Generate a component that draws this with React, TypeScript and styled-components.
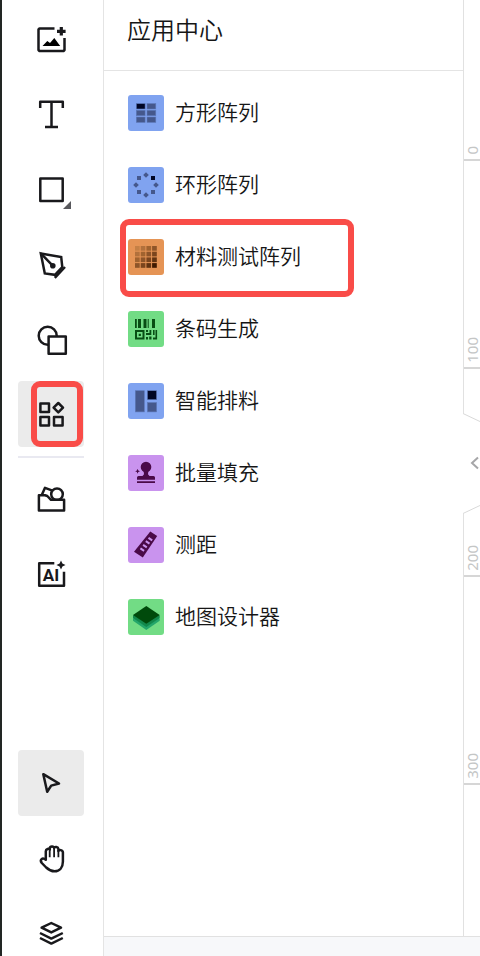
import React from "react";
import styled, { createGlobalStyle } from "styled-components";

const GlobalStyle = createGlobalStyle`
  *, *::before, *::after { box-sizing: border-box; }
  body {
    margin: 0;
    background: #ffffff;
    color: #161616;
    font-family: "Noto Sans CJK SC", "Noto Sans", sans-serif;
  }
  button { font: inherit; color: inherit; }
`;

const Shell = styled.div`
  display: flex;
  height: 100vh;
  overflow: hidden;
  border-left: 2px solid #222624;
`;

const Toolbar = styled.nav`
  flex: none;
  width: 102px;
  padding: 6px 19px 0 16px;
  border-right: 1px solid #e4e4e4;
`;

const ToolGroup = styled.div<{ $bottom?: boolean }>`
  display: flex;
  flex-direction: column;
  gap: 9px;
  margin-top: ${(p) => (p.$bottom ? "143px" : "0")};
`;

const ToolButton = styled.button<{ $active?: boolean }>`
  position: relative;
  display: flex;
  flex: none;
  align-items: center;
  justify-content: center;
  width: 66px;
  height: 66px;
  padding: 0;
  border: 0;
  border-radius: 4px;
  background: ${(p) => (p.$active ? "#ebebeb" : "transparent")};
  cursor: pointer;
`;

const Separator = styled.hr`
  height: 2px;
  margin: 9px 0 8px;
  border: 0;
  background: #e9e9f1;
`;

const ToolSvg = styled.svg`
  display: block;
  width: 36px;
  height: 36px;
  overflow: visible;
  fill: none;
  stroke: #19191c;
  stroke-width: 2.5;
  stroke-linejoin: round;
`;

const ToolMark = styled.span`
  position: absolute;
  inset: 0 1px 0 13px;
  border: 6px solid #f94c48;
  border-radius: 9px;
  pointer-events: none;
`;

const Workspace = styled.div`
  display: flex;
  flex: 1;
  flex-direction: column;
  min-width: 0;
`;

const Main = styled.div`
  display: flex;
  flex: 1;
  min-height: 0;
`;

const StatusBar = styled.footer`
  flex: none;
  height: 20px;
  border-top: 1px solid #e1e1e1;
  background: #f7f8fa;
`;

const Panel = styled.aside`
  position: relative;
  flex: 1;
  border-right: 1px solid #e1e1e1;
`;

const PanelHeader = styled.header`
  height: 71px;
  padding: 11px 23px;
  border-bottom: 1px solid #e4e4e4;
`;

const PanelTitle = styled.h1`
  margin: 0;
  font-size: 24px;
  line-height: 36px;
  font-weight: 350;
`;

const AppList = styled.ul`
  margin: 0;
  padding: 6px 24px;
  list-style: none;
`;

const AppItem = styled.li`
  position: relative;
`;

const AppButton = styled.button`
  display: flex;
  align-items: center;
  gap: 11px;
  width: 100%;
  height: 72px;
  padding: 0;
  border: 0;
  background: none;
  font-size: 21px;
  line-height: 32px;
  font-weight: 350;
  text-align: left;
  cursor: pointer;
`;

const AppName = styled.span`
  padding-bottom: 4px;
`;

const Tile = styled.svg<{ $color: string }>`
  flex: none;
  width: 36px;
  height: 36px;
  border-radius: 3px;
  background: ${(p) => p.$color};
`;

const ItemMark = styled.span`
  position: absolute;
  top: -2px;
  left: -8px;
  width: 234px;
  height: 78px;
  border: 6px solid #f94c48;
  border-radius: 9px;
  pointer-events: none;
`;

const CollapseButton = styled.button`
  position: absolute;
  top: 413px;
  left: 100%;
  width: 18px;
  height: 101px;
  padding: 0;
  border: 0;
  background: none;
  cursor: pointer;

  svg {
    display: block;
    overflow: visible;
  }
`;

const Ruler = styled.div`
  flex: none;
  width: 16px;
`;

const RulerMark = styled.div<{ $first?: boolean }>`
  display: flex;
  flex-direction: column;
  align-items: center;
  justify-content: flex-end;
  height: ${(p) => (p.$first ? "161px" : "208px")};
  padding-bottom: 4px;
  border-bottom: 2px solid #d6d6d6;
`;

const RulerLabel = styled.span`
  writing-mode: vertical-rl;
  transform: rotate(180deg);
  color: #c4c6c6;
  font-family: "Noto Sans", sans-serif;
  font-size: 15px;
  line-height: 16px;
`;

const tools = [
  {
    label: "图片",
    icon: (
      <>
        <path d="M21.5 7.5H6.5L5.5 8.5V29L6.5 30H30.5L31.5 29V17" />
        <path d="M28.3 6V14.6M24 10.3H32.6" strokeWidth="3.2" />
        <path d="M9.5 25L14.3 20L17 22L21.3 17L27.2 25Z" fill="#000" stroke="none" />
      </>
    ),
  },
  {
    label: "文本",
    icon: <path d="M7.2 12V5.7H29.8V12M18.5 5.7V31M12 31H25" />,
  },
  {
    label: "形状",
    icon: (
      <>
        <rect x="7.3" y="7.5" width="22.4" height="22.4" />
        <path d="M38 30V38H30Z" fill="#58585c" stroke="none" />
      </>
    ),
  },
  {
    label: "钢笔",
    icon: (
      <>
        <path d="M7.8 7.4L28.2 11L29.3 21L22 28.8L11.8 27.4Z" strokeLinejoin="miter" />
        <path d="M7.8 7.4L19.7 19.7M32 21L21.8 31.8" />
        <circle cx="19.8" cy="19.8" r="2.8" fill="#19191c" stroke="none" />
      </>
    ),
  },
  {
    label: "图形库",
    icon: (
      <>
        <circle cx="14.7" cy="14.7" r="9" />
        <rect x="15.6" y="15.6" width="17.2" height="17.2" fill="#fff" />
      </>
    ),
  },
  {
    label: "应用中心",
    active: true,
    icon: (
      <>
        <rect x="7.4" y="7.4" width="8.6" height="8.6" />
        <rect x="7.4" y="21" width="8.6" height="8.6" />
        <rect x="21" y="21" width="8.6" height="8.6" />
        <path d="M25.3 7L30 11.7L25.3 16.4L20.6 11.7Z" />
      </>
    ),
  },
];

const libraryTools = [
  {
    label: "素材",
    icon: (
      <>
        <path d="M9 13.5L12 6.8L19.5 9.7" />
        <circle cx="24" cy="13.2" r="5.8" />
        <path
          d="M5.9 14.3H12L14.3 15L18 18.8H31.1V29.6H5.9Z"
          fill="#fff"
        />
      </>
    ),
  },
  {
    label: "AI",
    icon: (
      <>
        <path d="M21.3 7.3H6.2V29.7H31V15.7" />
        <path
          d="M28 4.5L29.4 7.6L32.5 9L29.4 10.4L28 13.5L26.6 10.4L23.5 9L26.6 7.6Z"
          fill="#19191c"
          stroke="none"
        />
        <text
          x="18"
          y="25"
          textAnchor="middle"
          fontFamily="Roboto, sans-serif"
          fontWeight="700"
          fontSize="17"
          fill="#19191c"
          stroke="none"
        >
          AI
        </text>
      </>
    ),
  },
];

const canvasTools = [
  {
    label: "选择",
    active: true,
    icon: <path d="M10.3 9.2L26 18.5L18.2 20.6L14.2 26.8Z" />,
  },
  {
    label: "抓手",
    icon: (
      <>
        <path d="M12.8 19.8V11.2C12.8 8.8 16.2 8.2 16.8 9.5V8.4C17 5.8 20.8 5.8 21.2 8C21.6 6.4 25.2 6.8 25.4 9V11C26 9.4 29.8 9.8 29.9 12.4V21.5C29.9 27.5 26.6 31.3 21.6 31.3C17.9 31.3 15.6 29.8 13.2 27.5L8.8 23C6.4 19.7 9.3 17 12.8 19.8Z" />
        <path d="M16.7 9V17.3M21.1 8V17.3M25.4 10V17.3" strokeWidth="1.8" />
      </>
    ),
  },
  {
    label: "图层",
    icon: (
      <>
        <path d="M18.3 8L28 12.7L18.3 17.4L8.6 12.7Z" />
        <path d="M7 18L18.3 23.6L29.8 18M7 23L18.3 28.6L29.8 23" />
      </>
    ),
  },
];

const heat = ["#c58045", "#b2713c", "#a1632f", "#8e5529", "#7b451d", "#623412", "#401a00"];

const apps = [
  {
    name: "方形阵列",
    color: "#80a3f0",
    art: (
      <g fill="#45588c" stroke="#5c78b8" strokeWidth="0.6">
        <rect x="8.3" y="8.6" width="8.8" height="5.4" fill="#000625" />
        <rect x="19" y="8.6" width="8.8" height="5.4" />
        <rect x="8.3" y="15.3" width="8.8" height="5.4" />
        <rect x="19" y="15.3" width="8.8" height="5.4" />
        <rect x="8.3" y="22" width="8.8" height="5.4" />
        <rect x="19" y="22" width="8.8" height="5.4" />
      </g>
    ),
  },
  {
    name: "环形阵列",
    color: "#80a3f0",
    art: (
      <g fill="#45588c">
        <path d="M18 5.2L20.8 8L18 10.8L15.2 8Z" />
        <path d="M28 15.2L30.8 18L28 20.8L25.2 18Z" />
        <path d="M18 25.2L20.8 28L18 30.8L15.2 28Z" />
        <path d="M8 15.2L10.8 18L8 20.8L5.2 18Z" />
        <path d="M9 9h4v4h-4zM9 23h4v4h-4zM23 23h4v4h-4z" />
        <path d="M23 9h4v4h-4z" fill="#000625" />
      </g>
    ),
  },
  {
    name: "材料测试阵列",
    color: "#e59455",
    marked: true,
    art: (
      <g>
        {[0, 1, 2, 3].map((row) =>
          [0, 1, 2, 3].map((col) => (
            <rect
              key={`${row}-${col}`}
              x={7 + col * 5.7}
              y={7 + row * 5.7}
              width="4.7"
              height="4.7"
              fill={heat[row + col]}
            />
          ))
        )}
      </g>
    ),
  },
  {
    name: "条码生成",
    color: "#72dc85",
    art: (
      <g fill="#084d14">
        <path d="M7 8h1.8v9h-1.8zM10 8h3v9h-3zM15.5 8h3v9h-3zM19.7 8h1v9h-1zM24 8h3v9h-3z" />
        <path fillRule="evenodd" d="M7 19h9.5v9.5h-9.5zM9 21v5.5h5.5v-5.5z" />
        <path d="M10.7 22.7h2.2v2.2h-2.2zM18 19h2v2h-2zM21.5 19h1.8v5h-5.3v-2h3.5zM25 19h1.6v5h-1.6zM27.5 19h1.6v9.5h-4.1v-2h2.5zM18 26h2v2.5h-2zM21.2 25.5h2.3v3h-2.3z" />
      </g>
    ),
  },
  {
    name: "智能排料",
    color: "#80a3f0",
    art: (
      <g fill="#45588c" stroke="#5c78b8" strokeWidth="0.6">
        <rect x="7.3" y="7.7" width="9" height="21.2" />
        <rect x="19.4" y="7.7" width="9.2" height="9" fill="#000625" />
        <rect x="19.4" y="19.5" width="9.2" height="9.4" />
      </g>
    ),
  },
  {
    name: "批量填充",
    color: "#c993ee",
    art: (
      <g fill="#4a0a48">
        <circle cx="18" cy="12" r="5.3" />
        <path d="M15.5 15H20.5L20 19.2L21.5 21H25.5Q27 21 27 22.5V24.8H9V22.5Q9 21 10.5 21H14.5L16 19.2Z" />
        <path d="M9 26.2h18v1.8h-18z" />
        <path d="M9.6 13.8L10.3 15.6L12 16.3L10.3 17L9.6 18.8L8.9 17L7.2 16.3L8.9 15.6Z" />
      </g>
    ),
  },
  {
    name: "测距",
    color: "#c993ee",
    art: (
      <g>
        <path d="M22.3 4.6L29.2 9L14.8 30.4L6 24.8Z" fill="#4a0a48" />
        <path
          d="M20.5 10.8L24.2 13.3M17.8 14.2L21.5 16.7M15.1 17.8L18.8 20.3M12.4 21.4L16.1 23.9"
          stroke="#c993ee"
          strokeWidth="2"
        />
      </g>
    ),
  },
  {
    name: "地图设计器",
    color: "#72dc85",
    art: (
      <g>
        <path d="M5 19.5V21.7L18.3 31L31.7 21.7V19.5L18.3 13Z" fill="#24a66b" />
        <path d="M5 16.5V19L18.3 28L31.7 19V16.5L18.3 10Z" fill="#12884b" />
        <path d="M5 16L18.3 7L31.7 16L18.3 24.7Z" fill="#004a0b" />
      </g>
    ),
  },
];

type Tool = { label: string; icon: React.ReactNode; active?: boolean };

function ToolItem({ tool, marked }: { tool: Tool; marked?: boolean }) {
  return (
    <ToolButton type="button" aria-label={tool.label} $active={tool.active}>
      <ToolSvg viewBox="0 0 36 36" aria-hidden="true">
        {tool.icon}
      </ToolSvg>
      {marked && <ToolMark />}
    </ToolButton>
  );
}

export default function App() {
  return (
    <>
      <GlobalStyle />
      <Shell>
        <Toolbar>
          <ToolGroup>
            {tools.map((tool) => (
              <ToolItem key={tool.label} tool={tool} marked={tool.active} />
            ))}
          </ToolGroup>
          <Separator />
          <ToolGroup>
            {libraryTools.map((tool) => (
              <ToolItem key={tool.label} tool={tool} />
            ))}
          </ToolGroup>
          <ToolGroup $bottom>
            {canvasTools.map((tool) => (
              <ToolItem key={tool.label} tool={tool} />
            ))}
          </ToolGroup>
        </Toolbar>
        <Workspace>
          <Main>
            <Panel>
              <PanelHeader>
                <PanelTitle>应用中心</PanelTitle>
              </PanelHeader>
              <AppList>
                {apps.map((app) => (
                  <AppItem key={app.name}>
                    <AppButton type="button">
                      <Tile $color={app.color} viewBox="0 0 36 36" aria-hidden="true">
                        {app.art}
                      </Tile>
                      <AppName>{app.name}</AppName>
                    </AppButton>
                    {app.marked && <ItemMark />}
                  </AppItem>
                ))}
              </AppList>
              <CollapseButton type="button" aria-label="收起面板">
                <svg width="18" height="101" viewBox="0 0 18 101" aria-hidden="true">
                  <path d="M-1 0.5H1L18 9V92L1 100.5H-1Z" fill="#fff" />
                  <path d="M0 0.5L18 9M0 100.5L18 92" fill="none" stroke="#d9d9d9" />
                  <path d="M15 44.5L9 50L15 55.5" fill="none" stroke="#a6a6a8" strokeWidth="2" />
                </svg>
              </CollapseButton>
            </Panel>
            <Ruler>
              {[0, 100, 200, 300].map((value) => (
                <RulerMark key={value} $first={value === 0}>
                  <RulerLabel>{value}</RulerLabel>
                </RulerMark>
              ))}
            </Ruler>
          </Main>
          <StatusBar />
        </Workspace>
      </Shell>
    </>
  );
}
